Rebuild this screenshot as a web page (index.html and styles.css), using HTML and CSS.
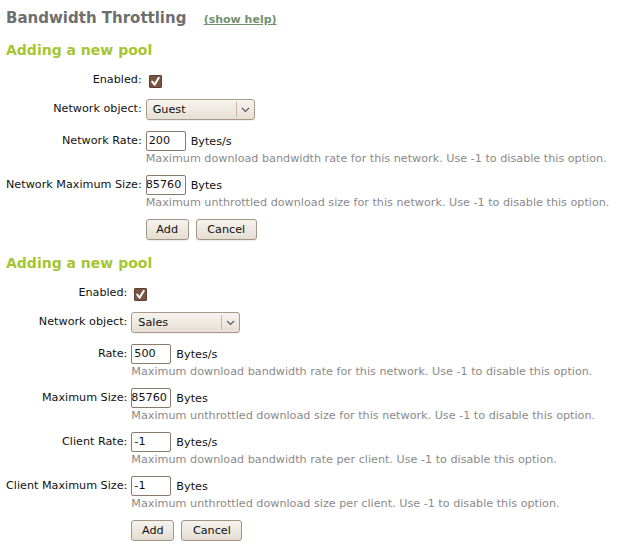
FILE: index.html
```html
<!DOCTYPE html>
<html>
<head>
<meta charset="utf-8">
<link rel="stylesheet" href="styles.css">
</head>
<body>
<div class="page">
  <h1 class="title">Bandwidth Throttling <a class="help-link" href="#">(show help)</a></h1>

  <section class="pool">
    <h2 class="pool-title">Adding a new pool</h2>
    <div class="grid">
      <label class="lbl lbl-check">Enabled:</label>
      <div class="field field-check"><span class="check"><svg viewBox="0 0 13 13" width="13" height="13"><path d="M3.2 6.6 L5.6 9.6 L9.8 2.8" fill="none" stroke="#fff" stroke-width="2" stroke-linecap="round" stroke-linejoin="round"/></svg></span></div>

      <label class="lbl lbl-select">Network object:</label>
      <div class="field field-select"><span class="select"><span class="select-text">Guest</span><span class="select-arrow"><svg viewBox="0 0 9 6" width="9" height="6"><path d="M1 1 L4.5 4.5 L8 1" fill="none" stroke="#555" stroke-width="1.1"/></svg></span></span></div>

      <label class="lbl">Network Rate:</label>
      <div class="field">
        <div class="line"><span class="input">200</span><span class="unit">Bytes/s</span></div>
        <div class="hint">Maximum download bandwidth rate for this network. Use -1 to disable this option.</div>
      </div>

      <label class="lbl">Network Maximum Size:</label>
      <div class="field">
        <div class="line"><span class="input input-clip">85760</span><span class="unit">Bytes</span></div>
        <div class="hint">Maximum unthrottled download size for this network. Use -1 to disable this option.</div>
      </div>

      <span></span>
      <div class="field buttons"><button class="btn btn-add">Add</button><button class="btn btn-cancel">Cancel</button></div>
    </div>
  </section>

  <section class="pool">
    <h2 class="pool-title">Adding a new pool</h2>
    <div class="grid">
      <label class="lbl lbl-check">Enabled:</label>
      <div class="field field-check"><span class="check"><svg viewBox="0 0 13 13" width="13" height="13"><path d="M3.2 6.6 L5.6 9.6 L9.8 2.8" fill="none" stroke="#fff" stroke-width="2" stroke-linecap="round" stroke-linejoin="round"/></svg></span></div>

      <label class="lbl lbl-select">Network object:</label>
      <div class="field field-select"><span class="select"><span class="select-text">Sales</span><span class="select-arrow"><svg viewBox="0 0 9 6" width="9" height="6"><path d="M1 1 L4.5 4.5 L8 1" fill="none" stroke="#555" stroke-width="1.1"/></svg></span></span></div>

      <label class="lbl">Rate:</label>
      <div class="field">
        <div class="line"><span class="input">500</span><span class="unit">Bytes/s</span></div>
        <div class="hint">Maximum download bandwidth rate for this network. Use -1 to disable this option.</div>
      </div>

      <label class="lbl">Maximum Size:</label>
      <div class="field">
        <div class="line"><span class="input input-clip">85760</span><span class="unit">Bytes</span></div>
        <div class="hint">Maximum unthrottled download size for this network. Use -1 to disable this option.</div>
      </div>

      <label class="lbl">Client Rate:</label>
      <div class="field">
        <div class="line"><span class="input">-1</span><span class="unit">Bytes/s</span></div>
        <div class="hint">Maximum download bandwidth rate per client. Use -1 to disable this option.</div>
      </div>

      <label class="lbl">Client Maximum Size:</label>
      <div class="field">
        <div class="line"><span class="input">-1</span><span class="unit">Bytes</span></div>
        <div class="hint">Maximum unthrottled download size per client. Use -1 to disable this option.</div>
      </div>

      <span></span>
      <div class="field buttons"><button class="btn btn-add">Add</button><button class="btn btn-cancel">Cancel</button></div>
    </div>
  </section>
</div>
</body>
</html>
```

FILE: styles.css
```css
* { box-sizing: border-box; }
html, body { margin: 0; padding: 0; background: #fff; }
body { font-family: "DejaVu Sans", sans-serif; font-size: 11.2px; color: #111; }

.page { padding: 6px 6px 0 6px; }

.title {
  margin: 0;
  font-size: 15px;
  font-weight: bold;
  color: #6f6f6f;
  line-height: 24px;
}
.help-link {
  margin-left: 12px;
  font-size: 11px;
  font-weight: bold;
  color: #74906f;
  text-decoration: underline;
}

.pool-title {
  margin: 9px 0 0 0;
  font-size: 14px;
  font-weight: bold;
  color: #a5c631;
  line-height: 18px;
}
.pool + .pool .pool-title { margin-top: 14px; }

.grid {
  display: grid;
  grid-template-columns: max-content max-content;
  column-gap: 4px;
  row-gap: 10px;
  margin-top: 13px;
}

.lbl {
  text-align: right;
  line-height: 20px;
}
.lbl-check { line-height: 14px; padding-top: 1px; }

.field-check { padding-left: 3px; height: 17px; padding-top: 3px; }
.check {
  display: inline-block;
  width: 13px; height: 13px;
  border-radius: 2px;
  background: #7a5443;
  box-shadow: inset 0 0 0 1px #5e3f31;
}
.check svg { display: block; }

.field-select { padding-bottom: 1px; }
.select {
  display: inline-flex;
  align-items: stretch;
  width: 109px;
  height: 21px;
  border: 1px solid #a99a89;
  border-radius: 3px;
  background: linear-gradient(#f7f4ef, #e6dfd5);
  box-shadow: 0 1px 0 rgba(0,0,0,0.06);
}
.select-text { flex: 1; padding-left: 6px; line-height: 19px; }
.select-arrow {
  width: 18px;
  border-left: 1px solid #c4b8aa;
  display: flex; align-items: center; justify-content: center;
  margin: 2px 0;
}
.select-arrow svg { display: block; }

.line { display: flex; align-items: center; height: 20px; }
.input {
  display: inline-block;
  width: 40px; height: 20px;
  border: 1px solid #8b7a69;
  border-radius: 2px;
  background: #fff;
  padding-left: 2px;
  line-height: 18px;
  white-space: nowrap;
  overflow: hidden;
}
.input-clip { padding-left: 0; text-indent: -1px; }
.unit { margin-left: 5px; }

.hint {
  color: #8a8a8a;
  line-height: 14px;
  margin-top: 1px;
  margin-bottom: -1px;
}

.buttons { display: flex; gap: 7px; }
.btn {
  font-family: "DejaVu Sans", sans-serif;
  font-size: 11.2px;
  color: #111;
  height: 21px;
  padding: 0;
  border: 1px solid #a39483;
  border-radius: 3px;
  background: linear-gradient(#f6f3ee, #e4ddd2);
  box-shadow: 0 1px 0 rgba(0,0,0,0.07);
}
.btn-add { width: 43px; }
.btn-cancel { width: 61px; }
```
